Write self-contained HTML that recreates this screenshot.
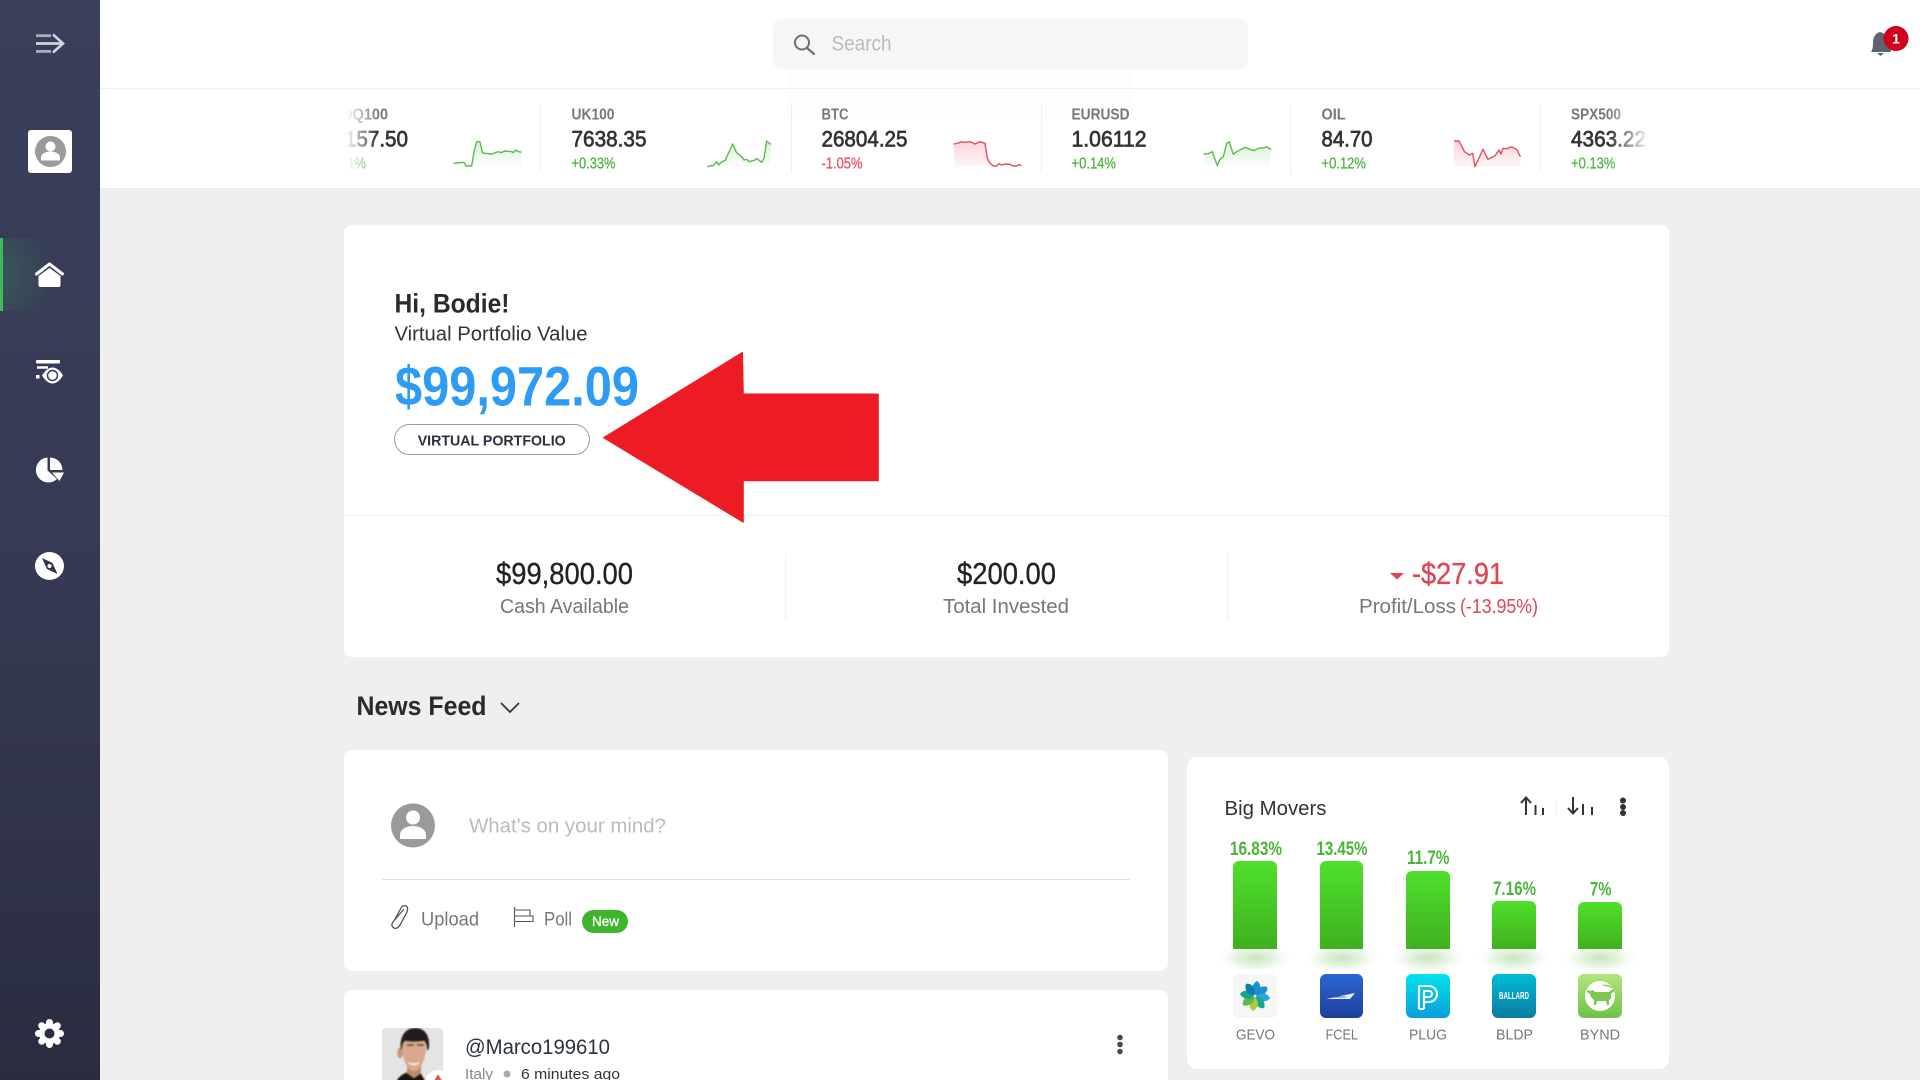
<!DOCTYPE html>
<html lang="en">
<head>
<meta charset="utf-8">
<title>Portfolio Dashboard</title>
<style>
html,body{margin:0;padding:0;width:1920px;height:1080px;overflow:hidden;background:#efefef}
svg{display:block;position:absolute;left:0;top:0}
text{font-family:"Liberation Sans",sans-serif}
.lab{font-size:16px;font-weight:700;fill:#777}
.pri{font-size:22px;fill:#333;stroke:#333;stroke-width:.7}
.up{font-size:16px;fill:#52b548;stroke:#52b548;stroke-width:.35}
.dn{font-size:16px;fill:#e85565;stroke:#e85565;stroke-width:.35}
.num{font-size:31px;fill:#222;stroke:#222;stroke-width:.35}
.sub{font-size:20px;fill:#777}
.pct{font-size:19px;font-weight:700;fill:#4cb33c}
.tk{font-size:15px;fill:#777}
</style>
</head>
<body>
<svg width="1920" height="1080" viewBox="0 0 1920 1080" xmlns="http://www.w3.org/2000/svg">
<defs>
<linearGradient id="side" x1="0" y1="0" x2="0" y2="1"><stop offset="0" stop-color="#3a3f5c"/><stop offset=".55" stop-color="#353953"/><stop offset="1" stop-color="#2a2d40"/></linearGradient>
<radialGradient id="glow" cx="0" cy=".5" r=".9"><stop offset="0" stop-color="#3cba5c" stop-opacity=".22"/><stop offset="1" stop-color="#3cba5c" stop-opacity="0"/></radialGradient>
<linearGradient id="gf" x1="0" y1="0" x2="0" y2="1"><stop offset="0" stop-color="#52b548" stop-opacity=".22"/><stop offset="1" stop-color="#52b548" stop-opacity=".02"/></linearGradient>
<linearGradient id="rf" x1="0" y1="0" x2="0" y2="1"><stop offset="0" stop-color="#e85565" stop-opacity=".25"/><stop offset="1" stop-color="#e85565" stop-opacity=".05"/></linearGradient>
<linearGradient id="fl" x1="0" y1="0" x2="1" y2="0"><stop offset="0" stop-color="#fff"/><stop offset="1" stop-color="#fff" stop-opacity="0"/></linearGradient>
<linearGradient id="fr" x1="0" y1="0" x2="1" y2="0"><stop offset="0" stop-color="#fff" stop-opacity="0"/><stop offset="1" stop-color="#fff"/></linearGradient>
<linearGradient id="bar" x1="0" y1="0" x2="0" y2="1"><stop offset="0" stop-color="#4fe02c"/><stop offset="1" stop-color="#3fb01f"/></linearGradient>
<radialGradient id="sh"><stop offset="0" stop-color="#c6e5bd"/><stop offset=".5" stop-color="#dff0da" stop-opacity=".8"/><stop offset="1" stop-color="#fff" stop-opacity="0"/></radialGradient>
<linearGradient id="lf" x1="0" y1="0" x2="0" y2="1"><stop offset="0" stop-color="#2c66d6"/><stop offset="1" stop-color="#1e409c"/></linearGradient>
<linearGradient id="lp" x1="0" y1="0" x2="0" y2="1"><stop offset="0" stop-color="#00e2f2"/><stop offset="1" stop-color="#0b9ed8"/></linearGradient>
<linearGradient id="lb" x1="0" y1="0" x2="0" y2="1"><stop offset="0" stop-color="#00bdd9"/><stop offset="1" stop-color="#0a7c9f"/></linearGradient>
<linearGradient id="ly" x1="0" y1="0" x2="0" y2="1"><stop offset="0" stop-color="#b2e67c"/><stop offset="1" stop-color="#6cc24a"/></linearGradient>
<clipPath id="pc"><rect x="382" y="1028" width="61" height="60" rx="4"/></clipPath>
<filter id="soft" x="-5%" y="-5%" width="110%" height="110%"><feGaussianBlur stdDeviation=".7"/></filter>
</defs>

<!-- page background / header / ticker -->
<rect width="1920" height="1080" fill="#efefef"/>
<rect x="100" width="1820" height="188" fill="#fff"/>
<rect x="787" y="69" width="346" height="46" fill="#fdfdfd"/>
<rect x="100" y="88" width="1820" height="1" fill="#efefef"/>

<!-- search -->
<rect x="773" y="19" width="475" height="50" rx="8" fill="#f6f6f6"/>
<circle cx="802" cy="42.500" r="7" fill="none" stroke="#707070" stroke-width="2"/>
<path d="M807 48l7 6" stroke="#707070" stroke-width="2.200" stroke-linecap="round"/>
<text x="831.500" y="50.500" font-size="21" fill="#bbb" textLength="60" lengthAdjust="spacingAndGlyphs">Search</text>

<!-- bell -->
<path d="M1871 52c2-3 2-6 2-10 0-5 3-9 7-10 4 1 9 5 9 10l2 10z" fill="#5a6472"/>
<path d="M1877 53h7l-3.500 3z" fill="#5a6472"/>
<circle cx="1896" cy="38.500" r="12.500" fill="#d0021b"/>
<text x="1896" y="43.500" font-size="14" font-weight="700" fill="#fff" text-anchor="middle">1</text>

<!-- sidebar -->
<rect width="100" height="1080" fill="url(#side)"/>
<rect x="0" y="238" width="60" height="73" fill="url(#glow)"/>
<rect x="0" y="238" width="3" height="73" fill="#3cba5c"/>
<g fill="none" stroke="#d2d4de" stroke-width="2.800">
<path d="M36 35.700h15" stroke="#a9acba"/><path d="M36 43.500h26"/><path d="M36 51.400h15" stroke="#a9acba"/>
<path d="M53 34.500l10 9-10 9" stroke-width="2.600"/>
</g>
<rect x="28" y="130" width="44" height="43" rx="3" fill="#fff"/>
<circle cx="50.500" cy="151.500" r="15.500" fill="#9a9a9a"/>
<circle cx="50.500" cy="146.500" r="5" fill="#fff"/>
<path d="M41 160.500v-3c0-4 5-6 9.500-6s9.500 2 9.500 6v3z" fill="#fff"/>
<!-- home -->
<path d="M36.500 274l13-10 13 10" fill="none" stroke="#fff" stroke-width="3" stroke-linecap="round" stroke-linejoin="round"/>
<path d="M38.500 276l11-8 11 8v9a2 2 0 0 1-2 2h-18a2 2 0 0 1-2-2z" fill="#fff"/>
<!-- eye -->
<rect x="36" y="360" width="24" height="3.500" rx="1" fill="#fff"/>
<path d="M37 367.500h11" stroke="#fff" stroke-width="2.500" fill="none"/>
<rect x="36" y="375" width="3.500" height="3.500" fill="#fff"/>
<path d="M42 375.500c3-5 7-8 10.500-8s8 3 10.500 8c-3 5-7 8-10.500 8s-7.500-3-10.500-8z" fill="#fff"/>
<circle cx="52.500" cy="375.500" r="5" fill="none" stroke="#33374f" stroke-width="1.400"/>
<!-- pie -->
<path d="M47.500 457.500a12.500 12.500 0 1 0 9.500 21.500l-9.500-8.500z" fill="#fff"/>
<path d="M50 457.500a12.500 12.500 0 0 1 12.500 12.500h-12.500z" fill="#fff"/>
<path d="M52 472.500h12l-4.500 8.500z" fill="#fff"/>
<!-- compass -->
<ellipse cx="49.500" cy="566" rx="14.500" ry="14" fill="#fff"/>
<path d="M42 558l10.500 5 5 11-10.500-5z" fill="#2f3349"/>
<circle cx="49.500" cy="566" r="2" fill="#fff"/>
<!-- gear -->
<g fill="#fff">
<circle cx="49.500" cy="1033.500" r="10.500"/>
<circle cx="49.500" cy="1022.500" r="3.500"/><circle cx="57.300" cy="1025.700" r="3.500"/><circle cx="60.500" cy="1033.500" r="3.500"/><circle cx="57.300" cy="1041.300" r="3.500"/><circle cx="49.500" cy="1044.500" r="3.500"/><circle cx="41.700" cy="1041.300" r="3.500"/><circle cx="38.500" cy="1033.500" r="3.500"/><circle cx="41.700" cy="1025.700" r="3.500"/>
</g>
<circle cx="49.500" cy="1033.500" r="5" fill="#2b2e42"/>

<!-- ticker -->
<g fill="#efefef">
<rect x="540" y="104" width="1" height="69"/><rect x="791" y="104" width="1" height="69"/><rect x="1041" y="104" width="1" height="69"/><rect x="1290" y="104" width="1" height="69"/><rect x="1540" y="104" width="1" height="69"/>
</g>
<text class="lab" x="322" y="119.500" textLength="66" lengthAdjust="spacingAndGlyphs">NSDQ100</text>
<text class="pri" x="322" y="146.500" textLength="86" lengthAdjust="spacingAndGlyphs">15157.50</text>
<text class="up" x="322" y="168.300" textLength="44" lengthAdjust="spacingAndGlyphs">+0.21%</text>
<text class="lab" x="571.500" y="119.500" textLength="43" lengthAdjust="spacingAndGlyphs">UK100</text>
<text class="pri" x="571.500" y="146.500" textLength="75" lengthAdjust="spacingAndGlyphs">7638.35</text>
<text class="up" x="571.500" y="168.300" textLength="44" lengthAdjust="spacingAndGlyphs">+0.33%</text>
<text class="lab" x="821.500" y="119.500" textLength="27" lengthAdjust="spacingAndGlyphs">BTC</text>
<text class="pri" x="821.500" y="146.500" textLength="86" lengthAdjust="spacingAndGlyphs">26804.25</text>
<text class="dn" x="821.500" y="168.300" textLength="41" lengthAdjust="spacingAndGlyphs">-1.05%</text>
<text class="lab" x="1071.500" y="119.500" textLength="58" lengthAdjust="spacingAndGlyphs">EURUSD</text>
<text class="pri" x="1071.500" y="146.500" textLength="75" lengthAdjust="spacingAndGlyphs">1.06112</text>
<text class="up" x="1071.500" y="168.300" textLength="44.500" lengthAdjust="spacingAndGlyphs">+0.14%</text>
<text class="lab" x="1321.500" y="119.500" textLength="24" lengthAdjust="spacingAndGlyphs">OIL</text>
<text class="pri" x="1321.500" y="146.500" textLength="51" lengthAdjust="spacingAndGlyphs">84.70</text>
<text class="up" x="1321.500" y="168.300" textLength="44.500" lengthAdjust="spacingAndGlyphs">+0.12%</text>
<text class="lab" x="1571" y="119.500" textLength="50" lengthAdjust="spacingAndGlyphs">SPX500</text>
<text class="pri" x="1571" y="146.500" textLength="75" lengthAdjust="spacingAndGlyphs">4363.22</text>
<text class="up" x="1571" y="168.300" textLength="44.500" lengthAdjust="spacingAndGlyphs">+0.13%</text>

<!-- sparklines (points in 3x crop coordinates) -->
<g transform="translate(450 130) scale(.33333)" stroke-width="4.200" stroke-linejoin="round" stroke-linecap="round">
<polygon fill="url(#gf)" points="12,110 12,100 42,97 48,108 65,108 72,65 80,35 90,35 97,68 105,70 125,72 145,65 152,68 165,63 185,65 190,68 198,60 205,65 213,66 213,110"/>
<polyline fill="none" stroke="#5cbb50" points="12,100 42,97 48,108 65,108 72,65 80,35 90,35 97,68 105,70 125,72 145,65 152,68 165,63 185,65 190,68 198,60 205,65 213,66"/>
<polygon fill="url(#gf)" points="774,110 780,107 790,107 800,95 806,105 815,95 825,92 848,42 860,68 875,80 882,90 890,88 897,95 915,90 920,85 935,97 942,85 950,33 958,40 962,42 962,110"/>
<polyline fill="none" stroke="#5cbb50" points="774,110 780,107 790,107 800,95 806,105 815,95 825,92 848,42 860,68 875,80 882,90 890,88 897,95 915,90 920,85 935,97 942,85 950,33 958,40 962,42"/>
</g>
<g transform="translate(950 130) scale(.33333)" stroke-width="4.200" stroke-linejoin="round" stroke-linecap="round">
<polygon fill="url(#rf)" points="12,110 12,42 28,38 32,35 45,37 60,35 75,42 90,35 105,40 112,85 120,100 130,108 140,108 147,101 155,105 165,102 180,103 190,108 200,108 207,104 213,106 213,110"/>
<polyline fill="none" stroke="#e2505c" points="12,42 28,38 32,35 45,37 60,35 75,42 90,35 105,40 112,85 120,100 130,108 140,108 147,101 155,105 165,102 180,103 190,108 200,108 207,104 213,106"/>
<polygon fill="url(#gf)" points="762,110 762,72 775,71 787,65 795,88 802,107 810,88 820,80 830,40 838,35 850,73 860,65 870,60 885,52 900,58 912,62 925,55 945,53 950,50 962,58 962,110"/>
<polyline fill="none" stroke="#5cbb50" points="762,72 775,71 787,65 795,88 802,107 810,88 820,80 830,40 838,35 850,73 860,65 870,60 885,52 900,58 912,62 925,55 945,53 950,50 962,58"/>
</g>
<polygon fill="url(#rf)" points="1454,167 1454,141 1459,141 1464.500,151.700 1469.400,155 1472.700,153.300 1475,166.700 1483,149.300 1488,159.300 1495,155.700 1499,150 1501,154 1503,148.300 1507,148.700 1511,146.700 1516.700,149.300 1520.400,156.700 1520.400,167"/>
<polyline fill="none" stroke="#e2505c" stroke-width="1.400" stroke-linejoin="round" points="1454,141 1459,141 1464.500,151.700 1469.400,155 1472.700,153.300 1475,166.700 1483,149.300 1488,159.300 1495,155.700 1499,150 1501,154 1503,148.300 1507,148.700 1511,146.700 1516.700,149.300 1520.400,156.700"/>

<!-- ticker edge fades -->
<rect x="300" y="95" width="46" height="85" fill="#fff"/>
<rect x="346" y="95" width="32" height="85" fill="url(#fl)"/>
<rect x="1608" y="95" width="42" height="85" fill="url(#fr)"/>
<rect x="1650" y="95" width="30" height="85" fill="#fff"/>

<!-- portfolio card -->
<rect x="344" y="225" width="1325" height="432" rx="8" fill="#fff"/>
<rect x="344" y="515" width="1325" height="1" fill="#efefef"/>
<rect x="785" y="553" width="1" height="67" fill="#efefef"/>
<rect x="1227" y="553" width="1" height="67" fill="#efefef"/>
<text x="394.500" y="312.300" font-size="27" font-weight="700" fill="#2b2b2b" textLength="115" lengthAdjust="spacingAndGlyphs">Hi, Bodie!</text>
<text x="394.500" y="340.500" font-size="20" fill="#333" textLength="193" lengthAdjust="spacingAndGlyphs">Virtual Portfolio Value</text>
<text x="395" y="405.700" font-size="56" font-weight="700" fill="#2e9bf5" textLength="244" lengthAdjust="spacingAndGlyphs">$99,972.09</text>
<rect x="394.500" y="424.500" width="195" height="30" rx="15" fill="#fff" stroke="#999"/>
<text x="417.700" y="445.700" font-size="15" font-weight="700" fill="#2b3040" textLength="148" lengthAdjust="spacingAndGlyphs">VIRTUAL PORTFOLIO</text>

<text class="num" x="496" y="584" textLength="137" lengthAdjust="spacingAndGlyphs">$99,800.00</text>
<text class="sub" x="500" y="613" textLength="129" lengthAdjust="spacingAndGlyphs">Cash Available</text>
<text class="num" x="957" y="584" textLength="99" lengthAdjust="spacingAndGlyphs">$200.00</text>
<text class="sub" x="943" y="613" textLength="126" lengthAdjust="spacingAndGlyphs">Total Invested</text>
<path d="M1390 573h14l-7 6.500z" fill="#e04552"/>
<text class="num" x="1412" y="584" textLength="92" lengthAdjust="spacingAndGlyphs" style="fill:#e04552;stroke:#e04552">-$27.91</text>
<text class="sub" x="1359" y="613" textLength="97" lengthAdjust="spacingAndGlyphs">Profit/Loss</text>
<text class="sub" x="1460" y="613" textLength="78" lengthAdjust="spacingAndGlyphs" style="fill:#e04552">(-13.95%)</text>

<!-- red annotation arrow -->
<path d="M603.500 437.700L742.500 352.300 743.300 394H878.300V480.700H743.300V522.300z" fill="#ed1c24" stroke="#ed1c24" stroke-linejoin="round"/>

<!-- news feed heading -->
<text x="356.500" y="715" font-size="27" font-weight="700" fill="#2b2b2b" textLength="130" lengthAdjust="spacingAndGlyphs">News Feed</text>
<path d="M501 703l9 9 9-9" fill="none" stroke="#333" stroke-width="1.700"/>

<!-- composer -->
<rect x="344" y="750" width="824" height="221" rx="8" fill="#fff"/>
<circle cx="413" cy="825.500" r="22" fill="#9a9a9a"/>
<circle cx="413" cy="817.500" r="7" fill="#fff"/>
<path d="M400 839v-4c0-6 7-9 13-9s13 3 13 9v4z" fill="#fff"/>
<text x="469" y="832.500" font-size="20" fill="#bbb" textLength="197" lengthAdjust="spacingAndGlyphs">What's on your mind?</text>
<rect x="382" y="879" width="748" height="1" fill="#dcdcdc"/>
<path d="M404 910l-11 13c-2 3-1 5 1 6s4 0 6-3l7-13c1-3 1-5-1-6s-4 0-5 2l-7 13" fill="none" stroke="#555" stroke-width="1.300" transform="translate(0 -1)"/>
<text class="sub" x="421" y="925.500" textLength="58" lengthAdjust="spacingAndGlyphs" style="font-size:19px">Upload</text>
<path d="M514.500 907v20M515 910h15v6h-15M515 916h18v5.500h-18M515 921.500h9" fill="none" stroke="#555" stroke-width="1.100"/>
<text class="sub" x="544" y="925.500" textLength="28" lengthAdjust="spacingAndGlyphs" style="font-size:19px">Poll</text>
<rect x="582" y="910" width="46" height="23" rx="11.500" fill="#3db62c"/>
<text x="592" y="926" font-size="14" fill="#fff" stroke="#fff" stroke-width=".3" textLength="27" lengthAdjust="spacingAndGlyphs">New</text>

<!-- post card -->
<rect x="344" y="990" width="824" height="120" rx="8" fill="#fff"/>
<g clip-path="url(#pc)">
<rect x="382" y="1028" width="61" height="60" fill="#e4e4e4"/>
<g filter="url(#soft)">
<path d="M394 1088c2-10 8-14 14-16h12l9 16z" fill="#181818"/>
<path d="M407 1062h14v11l-7 5-7-5z" fill="#b98a6e"/>
<ellipse cx="400" cy="1053" rx="2.800" ry="5.500" fill="#c9987b"/>
<path d="M402 1046c0-5 5-8 12-8s12 3 12 8c0 12-5 25-12 25s-12-13-12-25z" fill="#d8a98c"/>
<path d="M401 1050c-2-13 4-22 14-22 9 0 15 6 14 20l-2 3c0-5-1-8-3-10-6 1-13 1-19 0-2 2-3 5-3 9z" fill="#231d1a"/>
<path d="M407 1045h7M417 1045h7" stroke="#4d3527" stroke-width="1.500"/>
<path d="M408 1062c3 2 9 2 12 0-2 4-10 4-12 0z" fill="#fff"/>
</g>
<circle cx="438" cy="1083" r="13" fill="#fff"/>
<path d="M438 1074l4 7h-8z" fill="#e85050"/>
</g>
<text x="465" y="1054" font-size="21" fill="#2b3045" textLength="145" lengthAdjust="spacingAndGlyphs">@Marco199610</text>
<text x="465" y="1079" font-size="15" fill="#888" textLength="28" lengthAdjust="spacingAndGlyphs">Italy</text>
<circle cx="507" cy="1074" r="3.500" fill="#aaa"/>
<text x="521" y="1079" font-size="15" fill="#333" textLength="99" lengthAdjust="spacingAndGlyphs">6 minutes ago</text>
<g fill="#4a4a4a"><circle cx="1120" cy="1037.500" r="2.800"/><circle cx="1120" cy="1044.500" r="2.800"/><circle cx="1120" cy="1051.500" r="2.800"/></g>

<!-- big movers -->
<rect x="1187" y="757" width="482" height="312" rx="10" fill="#fff"/>
<text x="1224.500" y="815" font-size="20" fill="#333" textLength="102" lengthAdjust="spacingAndGlyphs">Big Movers</text>
<g fill="none" stroke="#333" stroke-width="2">
<path d="M1526 815v-17M1521 803l5-5.500 5 5.500"/><path d="M1535.500 805v10M1543 808v7"/>
<path d="M1573 797v17M1568 808l5 5.500 5-5.500"/><path d="M1583 804v11M1592 807v8"/>
</g>
<rect x="1556" y="800" width="1" height="15" fill="#eee"/>
<g fill="#333"><circle cx="1623" cy="800.500" r="3"/><circle cx="1623" cy="807" r="3"/><circle cx="1623" cy="813" r="3"/></g>

<g fill="url(#sh)">
<ellipse cx="1255" cy="958" rx="40" ry="16"/><ellipse cx="1342" cy="958" rx="40" ry="16"/><ellipse cx="1428" cy="958" rx="40" ry="16"/><ellipse cx="1514" cy="958" rx="40" ry="16"/><ellipse cx="1600" cy="958" rx="40" ry="16"/>
</g>
<rect x="1187" y="930" width="482" height="19" fill="#fff"/>
<rect x="1187" y="974" width="482" height="6" fill="#fff"/>
<g fill="url(#bar)">
<path d="M1233 949V867a6 6 0 0 1 6-6h32a6 6 0 0 1 6 6v82z"/>
<path d="M1320 949V867a6 6 0 0 1 6-6h31a6 6 0 0 1 6 6v82z"/>
<path d="M1406 949V877a6 6 0 0 1 6-6h32a6 6 0 0 1 6 6v72z"/>
<path d="M1492 949V907a6 6 0 0 1 6-6h32a6 6 0 0 1 6 6v42z"/>
<path d="M1578 949V908a6 6 0 0 1 6-6h32a6 6 0 0 1 6 6v41z"/>
</g>
<text class="pct" x="1230" y="855" textLength="52" lengthAdjust="spacingAndGlyphs">16.83%</text>
<text class="pct" x="1316.500" y="855" textLength="51" lengthAdjust="spacingAndGlyphs">13.45%</text>
<text class="pct" x="1407" y="864" textLength="42.500" lengthAdjust="spacingAndGlyphs">11.7%</text>
<text class="pct" x="1493" y="895" textLength="43" lengthAdjust="spacingAndGlyphs">7.16%</text>
<text class="pct" x="1590" y="895.500" textLength="21.500" lengthAdjust="spacingAndGlyphs">7%</text>

<!-- logos -->
<rect x="1233" y="974" width="44" height="44" rx="6" fill="#f6f6f6"/>
<g transform="translate(1255 996)">
<path d="M0-1C-5-6-3-12 2-15 7-12 6-5 0-1Z" fill="#1b8fd0"/>
<path d="M0-1C-5-6-3-12 2-15 7-12 6-5 0-1Z" fill="#1b8fd0" transform="rotate(45)"/>
<path d="M0-1C-5-6-3-12 2-15 7-12 6-5 0-1Z" fill="#2aa4dc" transform="rotate(90)"/>
<path d="M0-1C-5-6-3-12 2-15 7-12 6-5 0-1Z" fill="#1aa58e" transform="rotate(135)"/>
<path d="M0-1C-5-6-3-12 2-15 7-12 6-5 0-1Z" fill="#a8cc3a" transform="rotate(180)"/>
<path d="M0-1C-5-6-3-12 2-15 7-12 6-5 0-1Z" fill="#59b947" transform="rotate(225)"/>
<path d="M0-1C-5-6-3-12 2-15 7-12 6-5 0-1Z" fill="#1aa58e" transform="rotate(270)"/>
<path d="M0-1C-5-6-3-12 2-15 7-12 6-5 0-1Z" fill="#0e7fa8" transform="rotate(315)"/>
</g>
<rect x="1320" y="974" width="43" height="44" rx="6" fill="url(#lf)"/>
<path d="M1326 999l29-6-5 6z" fill="#fff" opacity=".9"/>
<path d="M1326 997h20" stroke="#2250b0" stroke-width=".8"/>
<rect x="1406" y="974" width="44" height="44" rx="6" fill="url(#lp)"/>
<path d="M1419 1009V986h10a8 8 0 0 1 0 16h-5M1424 1009v-18h5a3 3 0 0 1 0 6h-5M1419 1009h5" fill="none" stroke="#fff" stroke-width="2.100"/>
<rect x="1492" y="974" width="44" height="44" rx="6" fill="url(#lb)"/>
<text x="1499" y="999" font-size="10" font-weight="700" fill="#fff" textLength="30" lengthAdjust="spacingAndGlyphs">BALLARD</text>
<rect x="1578" y="974" width="44" height="44" rx="6" fill="url(#ly)"/>
<circle cx="1600" cy="996" r="15" fill="#fff"/>
<path d="M1601 985c5-1 10 0 13 4-4-2-9-3-13-4z" fill="#8ed060"/>
<path d="M1587 990l3 1 3-1 2 2h14l4-3 1 2-3 3v5l-2 1v5h-2l-1-4h-9l-1 4h-2v-5l-3-3-1-3-3-2z" fill="#7cc850"/>

<!-- labels -->
<text class="tk" x="1236" y="1039.500" textLength="39" lengthAdjust="spacingAndGlyphs">GEVO</text>
<text class="tk" x="1325.500" y="1039.500" textLength="32.500" lengthAdjust="spacingAndGlyphs">FCEL</text>
<text class="tk" x="1409" y="1039.500" textLength="38" lengthAdjust="spacingAndGlyphs">PLUG</text>
<text class="tk" x="1496" y="1039.500" textLength="37" lengthAdjust="spacingAndGlyphs">BLDP</text>
<text class="tk" x="1580" y="1039.500" textLength="40" lengthAdjust="spacingAndGlyphs">BYND</text>
</svg>
</body>
</html>
